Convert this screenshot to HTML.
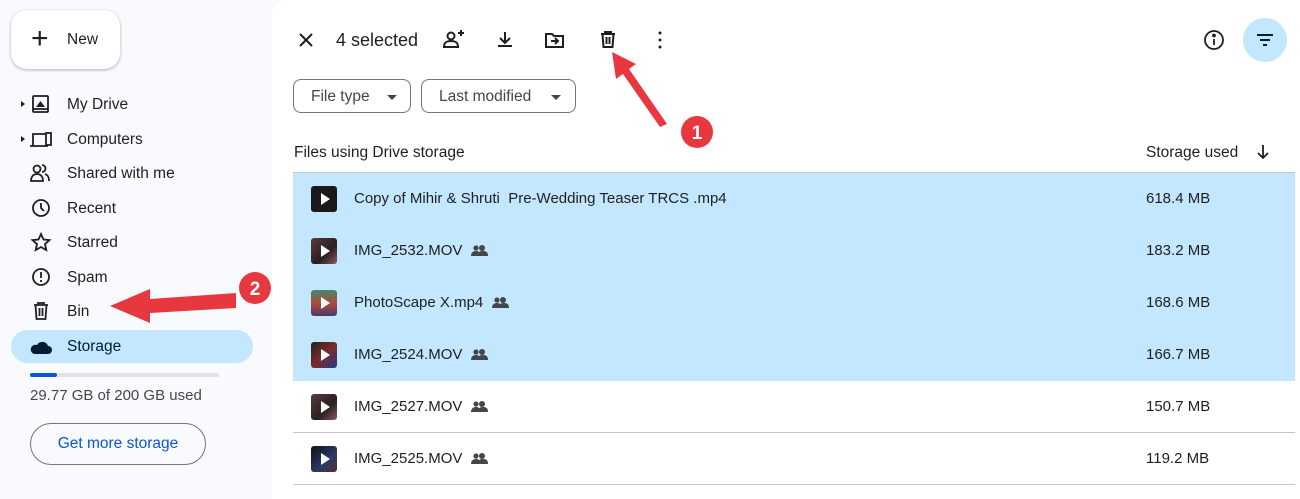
<!DOCTYPE html>
<html><head><meta charset="utf-8"><style>
*{margin:0;padding:0;box-sizing:border-box}
body{width:1300px;height:499px;background:#f8fafd;font-family:"Liberation Sans",Arial,sans-serif;color:#1f1f1f;position:relative;overflow:hidden}
.a{position:absolute}
.main{left:272px;top:0;width:1028px;height:499px;background:#fff;border-radius:16px 0 0 0}
.new{left:11px;top:10px;width:109px;height:59px;background:#fff;border-radius:16px;box-shadow:0 1px 3px rgba(0,0,0,.3);font-size:15px;color:#1f1f1f}
.nav{left:67px;font-size:15.5px;color:#1f1f1f}
.row{left:293px;width:1002px;height:52px;font-size:15px}
.row .n{position:absolute;left:61px;top:17px;white-space:nowrap}
.row .n svg{margin-left:9px;vertical-align:-1px}
.row .s{position:absolute;left:853px;top:17px}
.row .t{position:absolute;left:18px;top:13px;width:26px;height:26px;border-radius:3px;background:linear-gradient(135deg,#5a3a36,#2a1f24 60%,#8a5a5a)}
.row .t:after{content:"";position:absolute;left:10px;top:7px;border-left:9px solid #fff;border-top:6px solid transparent;border-bottom:6px solid transparent}
.sel{background:#c2e7ff}
.chip{top:79px;height:34px;border:1px solid #747775;border-radius:8px;font-size:15.5px;color:#444746}
</style></head><body>
<div class="a main"></div>
<div class="a new"><span class="a" style="left:20px;top:12px;font-size:30px">+</span><span class="a" style="left:56px;top:21px;font-size:15.5px">New</span></div>

<svg class="a" width="260" height="360" style="left:0;top:0" fill="none" stroke="#1f1f1f" stroke-width="1.8">
<path d="M21 101l4 3-4 3z M21 136l4 3-4 3z" fill="#1f1f1f" stroke="none"/>
<rect x="33" y="96" width="15" height="16" rx="1"/><path d="M36 107h9l-4.5-6z" fill="#1f1f1f" stroke="none"/><path d="M33 109h15"/>
<path d="M33 146v-12h12 M30 146h18"/><rect x="46" y="133" width="5" height="12"/>
<circle cx="37" cy="169" r="3.5"/><path d="M31 181c0-5 3-7 6-7s6 2 6 7z"/><path d="M42 165a3.5 3.5 0 0 1 0 7 M45 174c3 1 4 3 4 7"/>
<circle cx="41" cy="208" r="8"/><path d="M41 203v5l3 3"/>
<path d="M41 234l2.5 5.5 6 .6-4.5 4 1.3 6-5.3-3.1-5.3 3.1 1.3-6-4.5-4 6-.6z"/>
<circle cx="41" cy="277" r="8"/><path d="M41 272v6 M41 280v2"/>
<path d="M34 305h14 M38 305v-2h6v2 M35.5 305l1 14h9l1-14 M39.5 308v8 M42.5 308v8"/>
</svg>
<div class="a nav" style="top:96px">My Drive</div>
<div class="a nav" style="top:131px">Computers</div>
<div class="a nav" style="top:165px">Shared with me</div>
<div class="a nav" style="top:200px">Recent</div>
<div class="a nav" style="top:234px">Starred</div>
<div class="a nav" style="top:269px">Spam</div>
<div class="a nav" style="top:303px">Bin</div>
<div class="a" style="left:11px;top:330px;width:242px;height:33px;background:#c2e7ff;border-radius:17px"></div>
<svg class="a" width="22" height="16" style="left:30px;top:339px"><path d="M4 15h14a4 4 0 0 0 0-8 6 6 0 0 0-11-1 4.5 4.5 0 0 0-3 9z" fill="#001d35"/></svg>
<div class="a nav" style="top:338px;color:#001d35">Storage</div>
<div class="a" style="left:30px;top:373px;width:189px;height:4px;background:#e1e3e1;border-radius:2px"></div>
<div class="a" style="left:30px;top:373px;width:27px;height:4px;background:#0b57d0;border-radius:2px"></div>
<div class="a" style="left:30px;top:387px;font-size:15px;color:#444746">29.77 GB of 200 GB used</div>
<div class="a" style="left:30px;top:423px;width:176px;height:42px;border:1px solid #747775;border-radius:21px;color:#0b57d0;font-size:15.5px;text-align:center;line-height:40px">Get more storage</div>

<svg class="a" width="400" height="30" style="left:290px;top:25px" fill="none" stroke="#1f1f1f" stroke-width="2">
<path d="M10 9l12 12M22 9L10 21"/>
<circle cx="161" cy="11" r="3.5"/><path d="M154 22c0-5 3-6 7-6s7 1 7 6z M168 8h6 M171 5v6"/>
<path d="M215 7v10 M210 13l5 5 5-5 M208 21h14"/>
<path d="M256 9h6l2 2h9v11h-17z M261 16h7 M265 13l3 3-3 3"/>
<path d="M311 9h14 M315 9v-2h6v2 M312.5 9l1 13h9l1-13 M316.5 12v7 M319.5 12v7"/>
<circle cx="370" cy="8" r="1.5" fill="#1f1f1f" stroke="none"/><circle cx="370" cy="15" r="1.5" fill="#1f1f1f" stroke="none"/><circle cx="370" cy="22" r="1.5" fill="#1f1f1f" stroke="none"/>
</svg>
<div class="a" style="left:336px;top:30px;font-size:18px;color:#1f1f1f">4 selected</div>
<svg class="a" width="24" height="24" style="left:1202px;top:28px" fill="none" stroke="#1f1f1f" stroke-width="1.8"><circle cx="12" cy="12" r="9"/><path d="M12 11v6"/><circle cx="12" cy="7.5" r="1" fill="#1f1f1f"/></svg>
<div class="a" style="left:1243px;top:18px;width:44px;height:44px;border-radius:50%;background:#c2e7ff"></div>
<svg class="a" width="20" height="20" style="left:1255px;top:30px" stroke="#001d35" stroke-width="2"><path d="M2 5h16 M5 10h10 M8 15h4"/></svg>

<div class="a chip" style="left:293px;width:118px"><span class="a" style="left:17px;top:8px">File type</span><span class="a" style="left:93px;top:15px;border-top:5px solid #444746;border-left:5px solid transparent;border-right:5px solid transparent"></span></div>
<div class="a chip" style="left:421px;width:155px"><span class="a" style="left:17px;top:8px">Last modified</span><span class="a" style="left:129px;top:15px;border-top:5px solid #444746;border-left:5px solid transparent;border-right:5px solid transparent"></span></div>

<div class="a" style="left:294px;top:144px;font-size:15.5px">Files using Drive storage</div>
<div class="a" style="left:1146px;top:144px;font-size:15.5px">Storage used</div>
<svg class="a" width="16" height="18" style="left:1255px;top:143px" fill="none" stroke="#1f1f1f" stroke-width="1.8"><path d="M8 2v13 M3 10l5 5 5-5"/></svg>
<div class="a" style="left:293px;top:172px;width:1002px;height:1px;background:#c4c7c5"></div>

<svg width="0" height="0" style="position:absolute"><defs><g id="p" fill="#444746"><circle cx="11" cy="4" r="3"/><circle cx="5" cy="4" r="2.6"/><path d="M0 12c0-4 3-5 5-5s5 1 5 5z M7 12c0-4 2-5 5-5s5 1 5 5z"/></g></defs></svg>

<div class="a row sel" style="top:173px"><div class="t" style="background:#1a1a1a"></div><div class="n">Copy of Mihir &amp; Shruti&nbsp; Pre-Wedding Teaser TRCS .mp4</div><div class="s">618.4 MB</div></div>
<div class="a row sel" style="top:225px"><div class="t"></div><div class="n">IMG_2532.MOV<svg width="17" height="12"><use href="#p"/></svg></div><div class="s">183.2 MB</div></div>
<div class="a row sel" style="top:277px"><div class="t" style="background:linear-gradient(180deg,#3f8a6a,#b04a3a 50%,#4a3a6a)"></div><div class="n">PhotoScape X.mp4<svg width="17" height="12"><use href="#p"/></svg></div><div class="s">168.6 MB</div></div>
<div class="a row sel" style="top:329px"><div class="t" style="background:linear-gradient(135deg,#222,#7a2a2a 50%,#2a3a8a)"></div><div class="n">IMG_2524.MOV<svg width="17" height="12"><use href="#p"/></svg></div><div class="s">166.7 MB</div></div>
<div class="a row" style="top:381px;border-bottom:1px solid #c4c7c5"><div class="t"></div><div class="n">IMG_2527.MOV<svg width="17" height="12"><use href="#p"/></svg></div><div class="s">150.7 MB</div></div>
<div class="a row" style="top:433px;border-bottom:1px solid #c4c7c5"><div class="t" style="background:linear-gradient(135deg,#111,#2a3a6a 60%,#5a2a2a)"></div><div class="n">IMG_2525.MOV<svg width="17" height="12"><use href="#p"/></svg></div><div class="s">119.2 MB</div></div>

<svg class="a" width="1300" height="499" style="left:0;top:0">
<path d="M660 127L623 74l-7 5-4-27 24 12-7 5 38 55z" fill="#e8383f"/>
<circle cx="697" cy="132" r="16" fill="#e8383f"/><text x="697" y="139" text-anchor="middle" font-family="Liberation Sans" font-weight="bold" font-size="19" fill="#fff">1</text>
<path d="M236 293l-86 6v-10l-40 17 40 17v-10l86-5z" fill="#e8383f"/>
<circle cx="255" cy="288" r="16" fill="#e8383f"/><text x="255" y="295" text-anchor="middle" font-family="Liberation Sans" font-weight="bold" font-size="19" fill="#fff">2</text>
</svg>
</body></html>
